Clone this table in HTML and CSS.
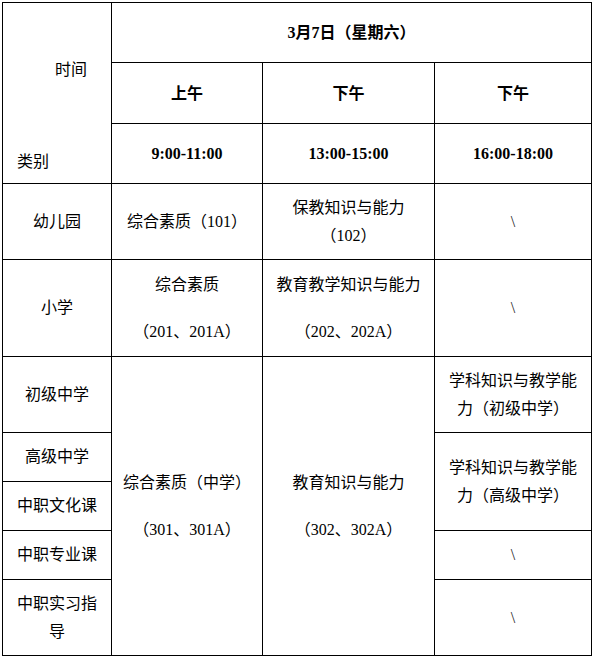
FILE: index.html
```html
<!DOCTYPE html>
<html lang="zh-CN">
<head>
<meta charset="utf-8">
<title>考试时间安排</title>
<link rel="stylesheet" href="styles.css">
</head>
<body>
<table class="schedule">
  <colgroup>
    <col class="c1">
    <col class="c2">
    <col class="c3">
    <col class="c4">
  </colgroup>
  <tr class="h60">
    <td rowspan="3" class="corner">
      <div class="corner-box">
        <span class="corner-time">时间</span>
        <span class="corner-cat">类别</span>
      </div>
    </td>
    <th colspan="3">3月7日（星期六）</th>
  </tr>
  <tr class="h61">
    <th class="half">上午</th>
    <th class="half">下午</th>
    <th class="half">下午</th>
  </tr>
  <tr class="h60">
    <th>9:00-11:00</th>
    <th>13:00-15:00</th>
    <th>16:00-18:00</th>
  </tr>
  <tr class="h76">
    <td>幼儿园</td>
    <td>综合素质（101）</td>
    <td>保教知识与能力<br>（102）</td>
    <td class="none">\</td>
  </tr>
  <tr class="h97">
    <td>小学</td>
    <td><p class="para">综合素质</p><p class="para">（201、201A）</p></td>
    <td><p class="para">教育教学知识与能力</p><p class="para">（202、202A）</p></td>
    <td class="none">\</td>
  </tr>
  <tr class="h76">
    <td>初级中学</td>
    <td rowspan="5"><p class="para">综合素质（中学）</p><p class="para">（301、301A）</p></td>
    <td rowspan="5"><p class="para">教育知识与能力</p><p class="para">（302、302A）</p></td>
    <td class="wide">学科知识与教学能力（初级中学）</td>
  </tr>
  <tr class="h49">
    <td>高级中学</td>
    <td rowspan="2" class="wide">学科知识与教学能力（高级中学）</td>
  </tr>
  <tr class="h49">
    <td>中职文化课</td>
  </tr>
  <tr class="h49">
    <td>中职专业课</td>
    <td class="none">\</td>
  </tr>
  <tr class="h76">
    <td>中职实习指导</td>
    <td class="none">\</td>
  </tr>
</table>
</body>
</html>
```
FILE: styles.css
```css
html, body {
  margin: 0;
  padding: 0;
  background: #ffffff;
}

body {
  padding: 2px 0 0 2px;
  font-family: "Liberation Serif", "Noto Sans CJK SC", serif;
  font-size: 16px;
  color: #000000;
}

.schedule {
  border-collapse: collapse;
  table-layout: fixed;
  width: 589px;
}

.c1 { width: 109px; }
.c2 { width: 151px; }
.c3 { width: 172px; }
.c4 { width: 157px; }

.schedule td,
.schedule th {
  border: 1px solid #000000;
  padding: 0 8px;
  text-align: center;
  vertical-align: middle;
  line-height: 28px;
  font-weight: normal;
}

.schedule th {
  font-weight: bold;
}

.schedule th.half {
  padding-top: 2px;
}

.h60 { height: 60px; }
.h61 { height: 61px; }
.h76 { height: 76px; }
.h97 { height: 97px; }
.h49 { height: 49px; }

.schedule td.corner {
  padding: 0;
  vertical-align: top;
  text-align: left;
}

.corner-box {
  height: 180px;
  display: flex;
  flex-direction: column;
  justify-content: space-between;
  padding: 53px 0 7px 0;
  box-sizing: border-box;
}

.corner-time {
  margin-left: 52px;
}

.corner-cat {
  margin-left: 14px;
}

.para {
  margin: 0;
}

.para + .para {
  margin-top: 19px;
}

.schedule td.wide {
  padding: 0 9px;
}

.schedule td.none {
  font-size: 16px;
  color: #222222;
}
```
